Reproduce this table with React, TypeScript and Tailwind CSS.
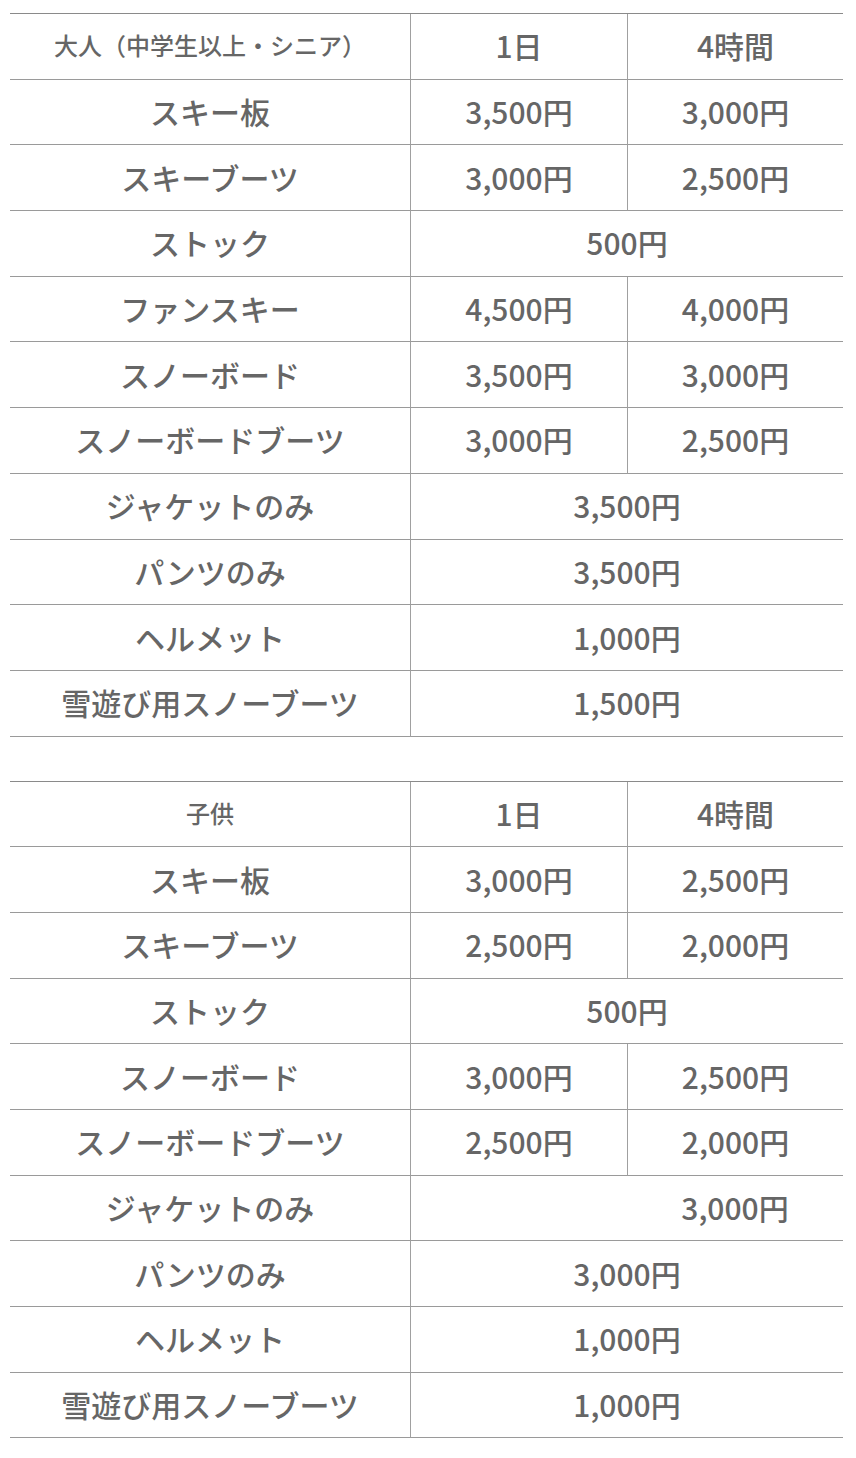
import React from "react";

type Row = {
  name: string;
  day?: string;
  half?: string;
  single?: string;
  // 料金がセル右側に寄っている行
  shifted?: boolean;
};

const adultRows: Row[] = [
  { name: "スキー板", day: "3,500円", half: "3,000円" },
  { name: "スキーブーツ", day: "3,000円", half: "2,500円" },
  { name: "ストック", single: "500円" },
  { name: "ファンスキー", day: "4,500円", half: "4,000円" },
  { name: "スノーボード", day: "3,500円", half: "3,000円" },
  { name: "スノーボードブーツ", day: "3,000円", half: "2,500円" },
  { name: "ジャケットのみ", single: "3,500円" },
  { name: "パンツのみ", single: "3,500円" },
  { name: "ヘルメット", single: "1,000円" },
  { name: "雪遊び用スノーブーツ", single: "1,500円" },
];

const kidsRows: Row[] = [
  { name: "スキー板", day: "3,000円", half: "2,500円" },
  { name: "スキーブーツ", day: "2,500円", half: "2,000円" },
  { name: "ストック", single: "500円" },
  { name: "スノーボード", day: "3,000円", half: "2,500円" },
  { name: "スノーボードブーツ", day: "2,500円", half: "2,000円" },
  { name: "ジャケットのみ", single: "3,000円", shifted: true },
  { name: "パンツのみ", single: "3,000円" },
  { name: "ヘルメット", single: "1,000円" },
  { name: "雪遊び用スノーブーツ", single: "1,000円" },
];

const cell = "flex items-center justify-center h-[65.7px] pb-[2px] border-b border-[#9a9a9a]";

function PriceTable({ title, rows }: { title: string; rows: Row[] }) {
  return (
    <div className="grid w-[833px] grid-cols-[400px_217px_216px] border-t border-[#8a8a8a] text-[30px] font-medium leading-none text-[#666666]">
      {/* ヘッダー */}
      <div className={`${cell} text-[24px]`}>{title}</div>
      <div className={`${cell} border-l border-l-[#a0a0a0]`}>1日</div>
      <div className={`${cell} border-l border-l-[#a0a0a0]`}>4時間</div>

      {rows.map((row) => (
        <React.Fragment key={row.name}>
          <div className={cell}>{row.name}</div>
          {row.single ? (
            row.shifted ? (
              <div className={`${cell} col-span-2 border-l border-l-[#a0a0a0] !justify-end`}>
                <span className="w-[216px] text-center">{row.single}</span>
              </div>
            ) : (
              <div className={`${cell} col-span-2 border-l border-l-[#a0a0a0]`}>{row.single}</div>
            )
          ) : (
            <>
              <div className={`${cell} border-l border-l-[#a0a0a0]`}>{row.day}</div>
              <div className={`${cell} border-l border-l-[#a0a0a0]`}>{row.half}</div>
            </>
          )}
        </React.Fragment>
      ))}
    </div>
  );
}

export default function App() {
  return (
    <div
      className="w-[856px] min-h-[1458px] bg-white pl-[10px] pt-[13px]"
      style={{ fontFamily: '"Noto Sans CJK JP", "Noto Sans", sans-serif' }}
    >
      <div className="flex flex-col gap-[44px]">
        <PriceTable title="大人（中学生以上・シニア）" rows={adultRows} />
        <PriceTable title="子供" rows={kidsRows} />
      </div>
    </div>
  );
}
